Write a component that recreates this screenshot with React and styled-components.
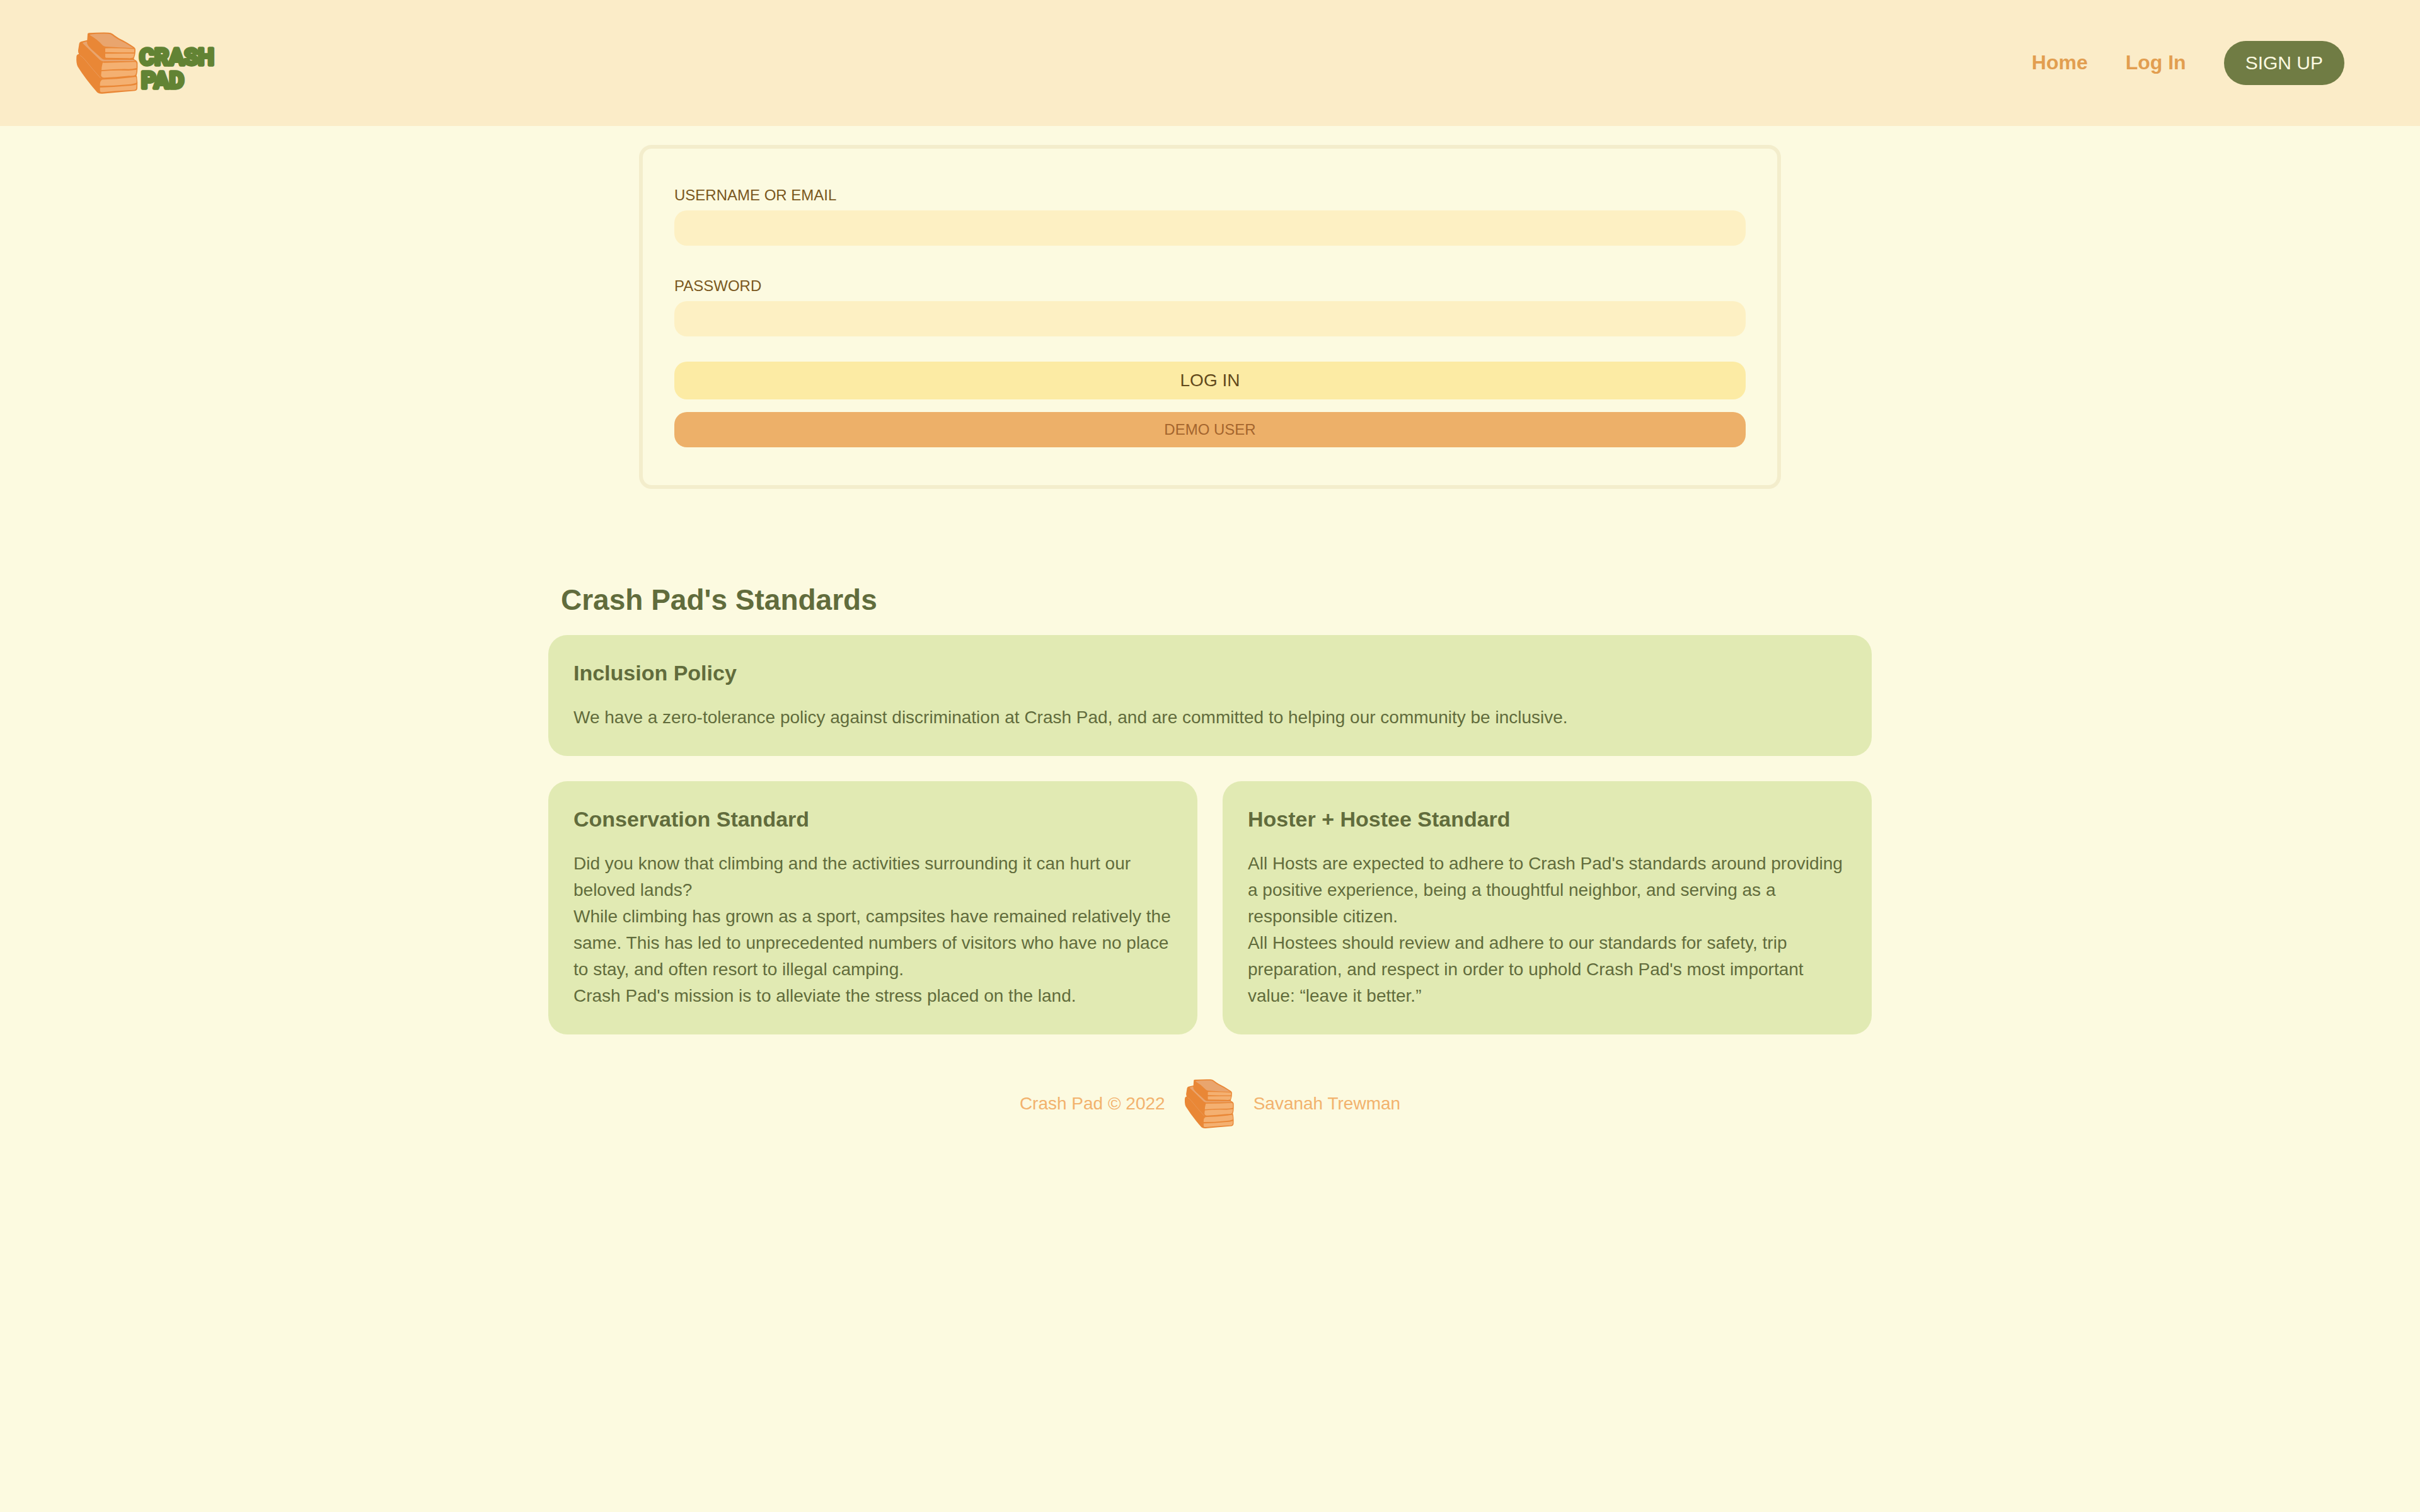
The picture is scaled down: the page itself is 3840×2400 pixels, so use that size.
import React from "react";
import styled, { createGlobalStyle } from "styled-components";

const GlobalStyle = createGlobalStyle`
  *, *::before, *::after { box-sizing: border-box; }
  body {
    margin: 0;
    background: #fcfae0;
    color: #616c3c;
    font-family: "Liberation Sans", Arial, Helvetica, sans-serif;
    font-size: 28px;
    line-height: 42px;
  }
  h2, h3, p { margin: 0; }
`;

const Header = styled.header`
  display: flex;
  align-items: center;
  justify-content: space-between;
  padding: 50px 120px;
  background: #fbecc8;
`;

const LogoLink = styled.a`
  display: flex;
`;

const LogoArt = styled.svg`
  display: block;
  height: 100px;
  width: auto;
`;

const Wordmark = styled.text`
  font-family: Roboto, sans-serif;
  font-size: 108px;
  font-weight: 700;
  fill: #628334;
  stroke: #628334;
  stroke-width: 16px;
  stroke-linejoin: round;
`;

const Nav = styled.nav`
  display: flex;
  align-items: center;
  gap: 60px;
`;

const NavLink = styled.a`
  padding-bottom: 2px;
  color: #e29e50;
  font-size: 32px;
  font-weight: 700;
  text-decoration: none;
`;

const SignUpButton = styled.button`
  height: 70px;
  padding: 0 34px;
  border: 0;
  border-radius: 36px;
  background: #707c44;
  color: #fcfae0;
  font: inherit;
  font-size: 30px;
  cursor: pointer;
`;

const LoginForm = styled.form`
  display: flex;
  flex-direction: column;
  max-width: 1812px;
  margin: 30px auto 0;
  padding: 56px 50px 60px;
  border: 6px solid #f3edcc;
  border-radius: 20px;
`;

const Field = styled.div`
  display: flex;
  flex-direction: column;
  gap: 6px;
  margin-bottom: ${(p) => (p.$last ? 40 : 46)}px;
`;

const FieldLabel = styled.label`
  color: #7a5820;
  font-size: 24px;
  line-height: 36px;
`;

const FieldInput = styled.input`
  height: 56px;
  padding: 0 20px;
  border: 0;
  border-radius: 20px;
  background: #fdf0c3;
  color: #7a5820;
  font: inherit;
`;

const Actions = styled.div`
  display: flex;
  flex-direction: column;
  gap: 20px;
`;

const ActionButton = styled.button`
  height: ${(p) => (p.$demo ? 56 : 60)}px;
  padding: 0;
  border: 0;
  border-radius: 20px;
  background: ${(p) => (p.$demo ? "#edb069" : "#fceba4")};
  color: ${(p) => (p.$demo ? "#a4652e" : "#634a1c")};
  font: inherit;
  font-size: ${(p) => (p.$demo ? 24 : 28)}px;
  cursor: pointer;
`;

const Standards = styled.section`
  max-width: 2100px;
  margin: 148px auto 0;
`;

const StandardsTitle = styled.h2`
  margin-bottom: 28px;
  padding-left: 20px;
  font-size: 46px;
  line-height: 56px;
`;

const CardGrid = styled.div`
  display: grid;
  grid-template-columns: 1fr 1fr;
  gap: 40px;
`;

const Card = styled.article`
  grid-column: ${(p) => (p.$wide ? "1 / -1" : "auto")};
  padding: 40px;
  border-radius: 30px;
  background: #e1eab3;
`;

const CardTitle = styled.h3`
  margin-bottom: 30px;
  font-size: 34px;
  line-height: 40px;
`;

const Footer = styled.footer`
  display: flex;
  align-items: center;
  justify-content: center;
  gap: 30px;
  padding: 70px 0;
  color: #f2b26d;
`;

const FooterMark = styled.svg`
  display: block;
  width: 80px;
  height: 80px;
`;

function PadStack() {
  return (
    <g strokeLinejoin="round" strokeLinecap="round">
      <path
        d="M117 72Q117 67 124 67Q175 64 216 65Q228 65 236 71Q250 82 266 92Q300 108 338 134Q345 139 345 146Q345 168 340 181Q336 189 339 193Q354 200 355 210Q356 246 352 262Q348 270 352 275Q356 302 354 330Q353 341 342 343Q260 350 188 356Q172 358 163 350Q108 288 70 227Q62 212 64 180Q65 168 76 167Q71 162 72 150L77 118Q78 110 86 108L115 101Z"
        fill="#e98736"
      />
      <path d="M127 75Q160 70 215 71Q226 71 231 76Q248 90 264 98Q299 114 335 139Q265 136 203 132Q193 131 188 125Q161 96 130 79Z" fill="#e9a56e" />
      <path d="M203 140Q265 139 340 143L339 160Q268 160 201 158L201 142Q201 140 203 140Z" fill="#f4b071" />
      <path d="M201 166Q268 164 339 165Q338 176 335 184Q325 188 310 187L205 185Q201 185 201 181Z" fill="#f4b071" />
      <path d="M94 113L112 107Q115 108 115 118Q118 128 134 143L185 189Q191 195 202 194L332 195Q341 197 343 201Q270 201 196 202Q185 203 176 196Q130 150 94 116Z" fill="#e9a56e" />
      <path d="M188 212Q186 208 196 209Q270 208 345 205Q350 206 350 214L350 234Q330 239 312 239Q250 238 183 244Q184 226 188 212Z" fill="#f4b071" />
      <path d="M183 249Q250 243 312 246Q332 244 350 242Q350 258 345 266Q338 272 316 271Q250 278 196 280Q181 279 181 267Z" fill="#f4b071" />
      <path d="M182 293Q184 289 196 289Q260 287 316 280L346 276Q349 280 350 290L350 304Q335 311 310 312Q240 319 176 319Q175 298 182 293Z" fill="#f4b071" />
      <path d="M176 327Q240 326 310 319Q335 318 350 312L349 329Q348 337 338 338Q250 342 190 349Q176 350 176 342Z" fill="#f4b071" />
      <path d="M82 174Q92 180 103 193Q140 239 178 281" fill="none" stroke="#e9a56e" strokeWidth="2" />
    </g>
  );
}

function Logo() {
  return (
    <LogoArt viewBox="60 60 675 300" role="img" aria-label="Crash Pad">
      <PadStack />
      <Wordmark x="364" y="218">CRASH</Wordmark>
      <Wordmark x="372" y="330">PAD</Wordmark>
    </LogoArt>
  );
}

export default function App() {
  return (
    <>
      <GlobalStyle />
      <Header>
        <LogoLink href="#home">
          <Logo />
        </LogoLink>
        <Nav>
          <NavLink href="#home">Home</NavLink>
          <NavLink href="#login">Log In</NavLink>
          <SignUpButton type="button">SIGN UP</SignUpButton>
        </Nav>
      </Header>
      <main>
        <LoginForm onSubmit={(e) => e.preventDefault()}>
          <Field>
            <FieldLabel htmlFor="credential">USERNAME OR EMAIL</FieldLabel>
            <FieldInput id="credential" type="text" />
          </Field>
          <Field $last>
            <FieldLabel htmlFor="password">PASSWORD</FieldLabel>
            <FieldInput id="password" type="password" />
          </Field>
          <Actions>
            <ActionButton type="submit">LOG IN</ActionButton>
            <ActionButton type="button" $demo>DEMO USER</ActionButton>
          </Actions>
        </LoginForm>
        <Standards>
          <StandardsTitle>Crash Pad's Standards</StandardsTitle>
          <CardGrid>
            <Card $wide>
              <CardTitle>Inclusion Policy</CardTitle>
              <p>
                We have a zero-tolerance policy against discrimination at Crash Pad, and are
                committed to helping our community be inclusive.
              </p>
            </Card>
            <Card>
              <CardTitle>Conservation Standard</CardTitle>
              <p>
                Did you know that climbing and the activities surrounding it can hurt our beloved
                lands?
              </p>
              <p>
                While climbing has grown as a sport, campsites have remained relatively the same.
                This has led to unprecedented numbers of visitors who have no place to stay, and
                often resort to illegal camping.
              </p>
              <p>Crash Pad's mission is to alleviate the stress placed on the land.</p>
            </Card>
            <Card>
              <CardTitle>Hoster + Hostee Standard</CardTitle>
              <p>
                All Hosts are expected to adhere to Crash Pad's standards around providing a
                positive experience, being a thoughtful neighbor, and serving as a responsible
                citizen.
              </p>
              <p>
                All Hostees should review and adhere to our standards for safety, trip preparation,
                and respect in order to uphold Crash Pad's most important value: “leave it better.”
              </p>
            </Card>
          </CardGrid>
        </Standards>
      </main>
      <Footer>
        <span>Crash Pad © 2022</span>
        <FooterMark viewBox="60 60 300 300" aria-hidden="true">
          <PadStack />
        </FooterMark>
        <span>Savanah Trewman</span>
      </Footer>
    </>
  );
}
